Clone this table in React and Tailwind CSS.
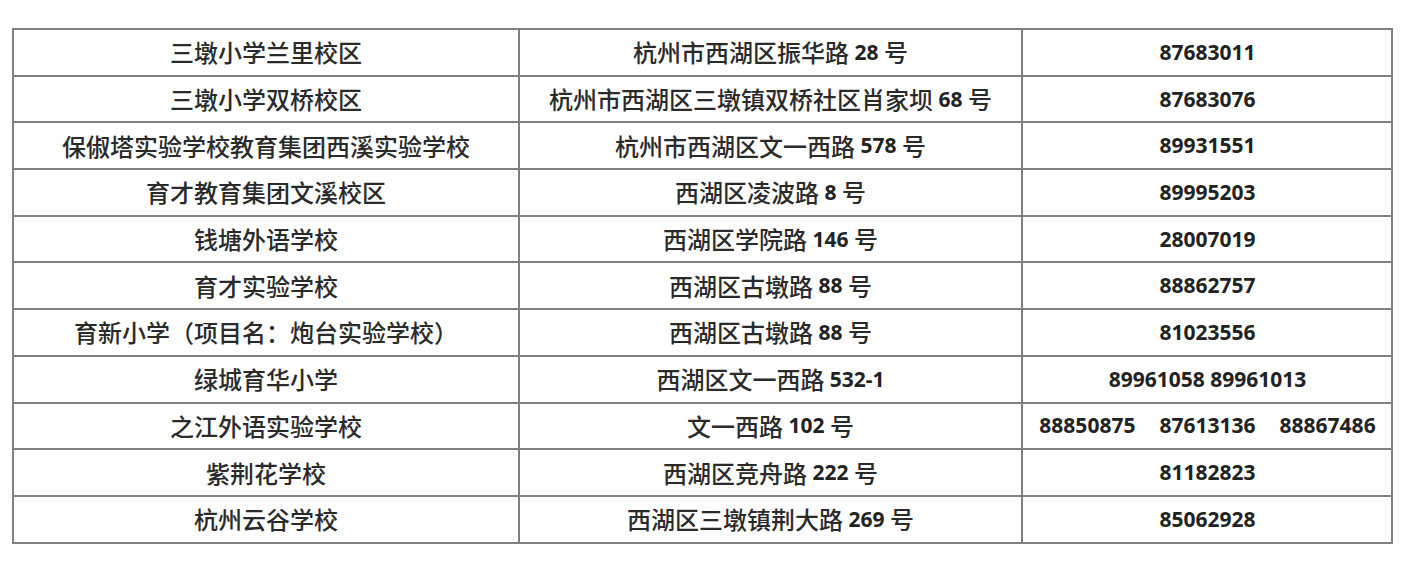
import React from "react";

const rows = [
  ["三墩小学兰里校区", ["杭州市西湖区振华路 ", "28", " 号"], ["87683011"]],
  ["三墩小学双桥校区", ["杭州市西湖区三墩镇双桥社区肖家坝 ", "68", " 号"], ["87683076"]],
  ["保俶塔实验学校教育集团西溪实验学校", ["杭州市西湖区文一西路 ", "578", " 号"], ["89931551"]],
  ["育才教育集团文溪校区", ["西湖区凌波路 ", "8", " 号"], ["89995203"]],
  ["钱塘外语学校", ["西湖区学院路 ", "146", " 号"], ["28007019"]],
  ["育才实验学校", ["西湖区古墩路 ", "88", " 号"], ["88862757"]],
  ["育新小学（项目名：炮台实验学校）", ["西湖区古墩路 ", "88", " 号"], ["81023556"]],
  ["绿城育华小学", ["西湖区文一西路 ", "532-1", ""], ["89961058 89961013"]],
  ["之江外语实验学校", ["文一西路 ", "102", " 号"], ["88850875", "87613136", "88867486"]],
  ["紫荆花学校", ["西湖区竞舟路 ", "222", " 号"], ["81182823"]],
  ["杭州云谷学校", ["西湖区三墩镇荆大路 ", "269", " 号"], ["85062928"]],
];

const cjk = "font-['Noto_Sans_CJK_SC',sans-serif] font-medium text-[24px] text-[#2a2a2a]";
const num = "font-['Noto_Sans',sans-serif] font-bold text-[21px] text-[#222]";
const cell =
  "h-[46.7px] border-r-2 border-b-2 border-[#808080] flex items-center justify-center whitespace-pre leading-none";

export default function App() {
  return (
    <div className="w-[1412px] h-[566px] bg-white pt-[28px] pl-[12px]">
      <div className="grid grid-cols-[506px_503px_370px] w-[1381px] border-l-2 border-t-2 border-[#808080]">
        {rows.map((r, i) => (
          <React.Fragment key={i}>
            <div className={cell}>
              <span className={cjk}>{r[0]}</span>
            </div>
            <div className={cell}>
              <span className={cjk}>{r[1][0]}</span>
              <span className={num}>{r[1][1]}</span>
              <span className={cjk}>{r[1][2]}</span>
            </div>
            <div className={cell + " gap-[24px] pl-[1px]"}>
              {r[2].map((n, j) => (
                <span key={j} className={num}>
                  {n}
                </span>
              ))}
            </div>
          </React.Fragment>
        ))}
      </div>
    </div>
  );
}
